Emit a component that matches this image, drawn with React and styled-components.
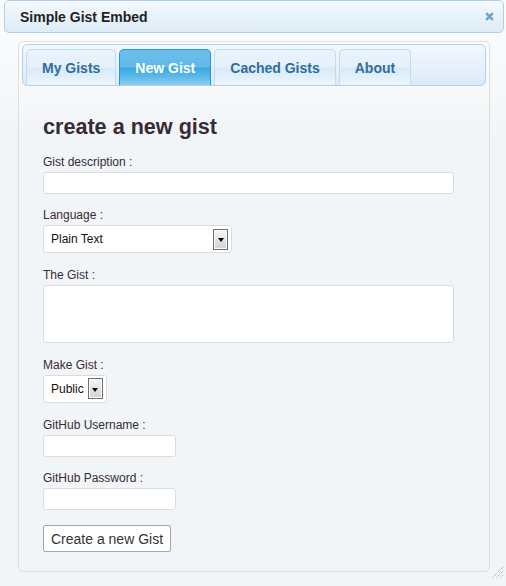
import styled, { createGlobalStyle } from "styled-components";

const GlobalStyle = createGlobalStyle`
  body {
    margin: 0;
    background: #f2f5f7;
    font-family: "Liberation Sans", Arial, sans-serif;
  }
`;

const Dialog = styled.div`
  position: relative;
  width: 506px;
  height: 586px;
  box-sizing: border-box;
  padding: 0 2px 0 4px;
  background: linear-gradient(#fbfcfd, #f2f5f7 140px);
  overflow: hidden;
`;

const TitleBar = styled.div`
  display: flex;
  align-items: center;
  justify-content: space-between;
  height: 33px;
  box-sizing: border-box;
  padding: 0 9px 0 15px;
  border: 1px solid #aed0ea;
  border-radius: 5px;
  background: linear-gradient(#f4f9fd, #ddecf7);
  color: #222;
  font-size: 14px;
  font-weight: bold;
`;

const CloseButton = styled.span`
  display: flex;
  width: 9px;
  height: 9px;
  cursor: pointer;
`;

const Panel = styled.div`
  margin: 8px 0 0 14px;
  width: 472px;
  box-sizing: border-box;
  border: 1px solid #dddddd;
  border-radius: 5px;
  padding: 2px 3px 0;
  background: linear-gradient(#fdfefe, #f2f5f7 90px);
`;

const TabNav = styled.ul`
  display: flex;
  gap: 3px;
  height: 42px;
  box-sizing: border-box;
  margin: 0;
  padding: 4px 3px 0;
  list-style: none;
  border: 1px solid #aed0ea;
  border-radius: 5px;
  background: linear-gradient(#f2f8fd, #dbeaf7);
`;

const Tab = styled.li`
  display: flex;
  align-items: center;
  height: 36px;
  box-sizing: border-box;
  padding: 0 15px;
  border: 1px solid ${(p) => (p.$active ? "#2694e8" : "#c5dbec")};
  border-bottom: 0;
  border-radius: 5px 5px 0 0;
  font-size: 14px;
  font-weight: bold;
  color: ${(p) => (p.$active ? "#ffffff" : "#2e6e9e")};
  background: ${(p) =>
    p.$active
      ? "linear-gradient(#6cbeea 0%, #60b9e8 48%, #3ba9e3 52%, #5ab7e7 75%, #8ccff1 100%)"
      : "linear-gradient(#e9f3fc 0%, #e4f0fb 48%, #d8e9f8 52%, #e3f0fb 78%, #ebf5fd 100%)"};
  cursor: pointer;
`;

const Form = styled.form`
  display: flex;
  flex-direction: column;
  align-items: flex-start;
  padding: 28px 21px 19px;
`;

const Heading = styled.h2`
  margin: 0 0 14.5px;
  font-size: 21.6px;
  line-height: 26px;
  font-weight: bold;
  color: #362b36;
`;

const Field = styled.div`
  display: flex;
  flex-direction: column;
  align-items: flex-start;
  margin-bottom: 14.8px;
`;

const Label = styled.label`
  margin-bottom: 2px;
  font-size: 12px;
  line-height: 15px;
  color: #362b36;
`;

const TextInput = styled.input`
  width: ${(p) => p.$width}px;
  height: 22px;
  box-sizing: border-box;
  margin: 0;
  padding: 0 4px;
  border: 1px solid #dcdcdc;
  border-radius: 3px;
  background: #fff;
  font: 12px "Liberation Sans", Arial, sans-serif;
  outline: none;
`;

const TextArea = styled.textarea`
  display: block;
  width: 411px;
  height: 58px;
  box-sizing: border-box;
  margin: 0;
  padding: 4px;
  border: 1px solid #dcdcdc;
  border-radius: 3px;
  background: #fff;
  font: 12px "Liberation Sans", Arial, sans-serif;
  resize: none;
  outline: none;
`;

const Select = styled.div`
  display: inline-flex;
  align-items: center;
  gap: 4px;
  width: ${(p) => (p.$width ? `${p.$width}px` : "auto")};
  height: 28px;
  box-sizing: border-box;
  padding: 0 3px 0 7px;
  border: 1px solid #dcdcdc;
  border-radius: 3px;
  background: #fff;
  font-size: 12px;
  color: #111;
`;

const SelectValue = styled.span`
  flex: 1;
`;

const ArrowBox = styled.span`
  display: flex;
  align-items: center;
  justify-content: center;
  width: 15px;
  height: 21px;
  box-sizing: border-box;
  border: 1px solid #6f6f6f;
  background: linear-gradient(#f6f6f6, #d2d2d2);
  box-shadow: inset 0 0 0 1px #fafafa;

  &::after {
    content: "";
    margin-top: 2px;
    border-left: 3.5px solid transparent;
    border-right: 3.5px solid transparent;
    border-top: 4px solid #000;
  }
`;

const SubmitButton = styled.button`
  height: 27px;
  box-sizing: border-box;
  margin: 0;
  padding: 0 7px;
  border: 1px solid #a5a5a5;
  border-radius: 2px;
  background: #fff;
  color: #333;
  font: 14px "Liberation Sans", Arial, sans-serif;
`;

const Grip = styled.span`
  position: absolute;
  right: 2px;
  bottom: 8px;
  display: flex;
`;

const tabs = ["My Gists", "New Gist", "Cached Gists", "About"];

const FakeSelect = ({ value, width }) => (
  <Select $width={width}>
    <SelectValue>{value}</SelectValue>
    <ArrowBox />
  </Select>
);

const App = () => {
  return (
    <>
      <GlobalStyle />
      <Dialog>
        <TitleBar>
          <span>Simple Gist Embed</span>
          <CloseButton>
            <svg width="9" height="9" viewBox="0 0 9 9">
              <path
                d="M1.2 1.2 L7.8 7.8 M7.8 1.2 L1.2 7.8"
                stroke="#6f9fca"
                strokeWidth="2.4"
                fill="none"
              />
            </svg>
          </CloseButton>
        </TitleBar>

        <Panel>
          <TabNav>
            {tabs.map((t) => (
              <Tab key={t} $active={t === "New Gist"}>
                {t}
              </Tab>
            ))}
          </TabNav>

          <Form onSubmit={(e) => e.preventDefault()}>
            <Heading>create a new gist</Heading>

            <Field>
              <Label>Gist description :</Label>
              <TextInput $width={411} />
            </Field>

            <Field>
              <Label>Language :</Label>
              <FakeSelect value="Plain Text" width={189} />
            </Field>

            <Field>
              <Label>The Gist :</Label>
              <TextArea />
            </Field>

            <Field>
              <Label>Make Gist :</Label>
              <FakeSelect value="Public" />
            </Field>

            <Field>
              <Label>GitHub Username :</Label>
              <TextInput $width={133} />
            </Field>

            <Field>
              <Label>GitHub Password :</Label>
              <TextInput $width={133} type="password" />
            </Field>

            <SubmitButton type="submit">Create a new Gist</SubmitButton>
          </Form>
        </Panel>

        <Grip>
          <svg width="12" height="12" viewBox="0 0 12 12">
            <g stroke="#72a7cf" strokeWidth="1" strokeDasharray="1 1">
              <path d="M0.5 11.5 L11.5 0.5" />
              <path d="M4.5 11.5 L11.5 4.5" />
              <path d="M8.5 11.5 L11.5 8.5" />
            </g>
          </svg>
        </Grip>
      </Dialog>
    </>
  );
};

export default App;
